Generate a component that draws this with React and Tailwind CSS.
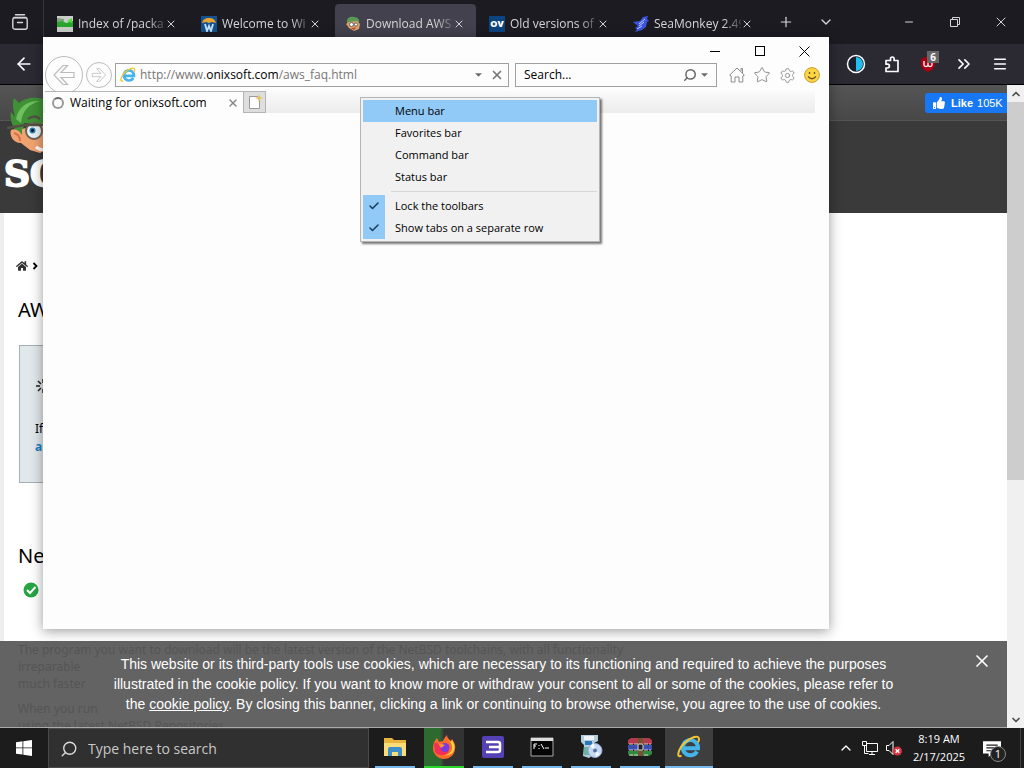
import React from 'react';
import {
  ArrowLeft,
  Check,
  ChevronDown,
  ChevronsRight,
  ChevronUp,
  Menu,
  Minus,
  Plus,
  Search,
  Settings,
  Star,
  X,
} from 'lucide-react';
import { FaHome, FaThumbsUp } from 'react-icons/fa';

const IeLogo = ({ className }) => (
  <svg viewBox="0 0 24 24" className={className} fill="none">
    <path d="M20 16.500a7.600 7.600 0 1 1 1-3.300H7" stroke="#45b4ea" strokeWidth="4" />
    <path d="M4.500 20.500C-1 24 1 14 7.500 8 14 2 22-.5 22 4c0 1.200-.5 2.500-1 3.300" stroke="#f2c531" strokeWidth="2" />
  </svg>
);

const MascotIcon = () => (
  <svg viewBox="0 0 16 16" className="size-4 shrink-0">
    <path d="M2 7C1 2 5 0 9 1c4 0 6 3 5 6l-3-1-7 1z" fill="#5b9a55" />
    <path d="M1 8l3-2 8-1 3 3-1 5-5 2-5-3z" fill="#dfa06c" />
    <circle cx="6.500" cy="8.500" r="2" fill="#fff" stroke="#666" />
    <circle cx="11" cy="8.500" r="1.600" fill="#fff" stroke="#666" />
    <path d="M6 12l5-.5-2 2.500z" fill="#b3433b" />
  </svg>
);

const tabs = [
  {
    title: 'Index of /packa',
    icon: (
      <svg viewBox="0 0 16 16" className="size-4 shrink-0">
        <path d="M0 0h16v16H0z" fill="#c9cfc8" />
        <path d="M0 5l4-1 5 3 7-2v6H0z" fill="#27a52d" />
        <path d="M0 2l7 1v2L0 6z" fill="#7fa37c" />
        <path d="M10 5l5-3v5z" fill="#4edc38" />
      </svg>
    ),
  },
  {
    title: 'Welcome to Wi',
    icon: (
      <svg viewBox="0 0 16 16" className="size-4 shrink-0">
        <path d="M0 0h16v16H0z" fill="#15518f" />
        <path d="M1 7c1-4 4-5 7-5s6 1 7 5l-4-1-3 1-3-1z" fill="#e8a531" />
        <path d="M4 8l2 7 2-5 2 5 2-7" fill="none" stroke="#c8e3f7" strokeWidth="1.800" />
      </svg>
    ),
  },
  { title: 'Download AWS', icon: <MascotIcon />, active: true },
  {
    title: 'Old versions of',
    icon: <span className="flex size-4 shrink-0 items-center justify-center bg-[#0c4480] text-[9px] font-black text-white">OV</span>,
  },
  {
    title: 'SeaMonkey 2.49',
    icon: (
      <svg viewBox="0 0 16 16" className="size-4 shrink-0">
        <path d="M0 6l7-1 3-4 5-1-1 3 2 2-2 1-1 5-4 3-7 2 2-3-2-1 3-2z" fill="#3b55dc" />
        <path d="M6 8l6-5M6 10l5-4M4 13l5-3" stroke="#b9ccff" />
      </svg>
    ),
  },
];

const Tab = ({ title, icon, active }) => (
  <div className={`mt-1 mr-[3px] flex h-10 w-[141px] items-center pl-[10px] ${active ? 'rounded-t bg-[#42414d]' : ''}`}>
    {icon}
    <span className="ml-[5px] w-[87px] whitespace-nowrap text-xs [mask-image:linear-gradient(to_right,black_80%,transparent_105%)]">
      {title}
    </span>
    <button aria-label="Close tab"><X className="size-3" strokeWidth={2} /></button>
  </div>
);

const RestoreIcon = () => (
  <svg viewBox="0 0 12 12" className="size-3" fill="none" stroke="currentColor">
    <path d="M1.500 3.500h7v7h-7zM3.500 3.500v-2h7v7h-2" />
  </svg>
);

const FirefoxChrome = () => (
  <header className="text-[#d5d5d9]">
    <div className="flex h-11 bg-[#1c1b22]">
      <button aria-label="Recent tabs" className="flex w-11 items-center border-r border-[#35343c] pl-3">
        <svg viewBox="0 0 16 16" className="size-4" fill="none" stroke="currentColor" strokeWidth="1.400">
          <path d="M3.500.7h9M2 3.500h12" strokeLinecap="round" />
          <rect x=".8" y="3.700" width="14.400" height="11.500" rx="2" />
          <path d="M5.500 8.500h5" strokeLinecap="round" />
        </svg>
      </button>
      <nav className="ml-[3px] flex">
        {tabs.map((tab) => <Tab key={tab.title} {...tab} />)}
      </nav>
      <button aria-label="New tab" className="w-10 pl-[11px]"><Plus className="size-4" strokeWidth={1.8} /></button>
      <button aria-label="List all tabs" className="w-10 pl-[11px]"><ChevronDown className="size-4" strokeWidth={2} /></button>
      <div className="ml-auto flex">
        <button aria-label="Minimize" className="flex w-[46px] items-center justify-center"><Minus className="size-3" strokeWidth={2} /></button>
        <button aria-label="Restore" className="flex w-[46px] items-center justify-center"><RestoreIcon /></button>
        <button aria-label="Close" className="flex w-[46px] items-center justify-center"><X className="size-4" strokeWidth={1.5} /></button>
      </div>
    </div>
    <div className="flex h-[41px] items-center border-b border-black bg-[#2b2a33] px-[14px] text-[#fbfbfe]">
      <button aria-label="Back"><ArrowLeft className="size-5" strokeWidth={2} /></button>
      <div className="ml-auto flex items-center gap-4">
        <button aria-label="Dark mode">
          <svg viewBox="0 0 20 20" className="size-5">
            <circle cx="10" cy="10" r="8.500" fill="#17202c" stroke="#fff" strokeWidth="1.500" />
            <path d="M10 3a7 7 0 0 1 0 14z" fill="#23bdf0" />
          </svg>
        </button>
        <button aria-label="Extensions">
          <svg viewBox="0 0 20 20" className="size-5" fill="none" stroke="currentColor" strokeWidth="1.700">
            <path d="M4 6.500h4.500V4.800a1.800 1.800 0 0 1 3.600 0v1.700H16v11H4V14h1.500a1.900 1.900 0 0 0 0-3.800H4z" strokeLinejoin="round" />
          </svg>
        </button>
        <button aria-label="uBlock" className="relative">
          <svg viewBox="0 0 20 20" className="size-5">
            <path d="M10 2l7 3v6c0 3-3 5-7 7-4-2-7-4-7-7V5z" fill="#a80010" />
            <path d="M6 7v4q0 1.500 2 1.500t2-1.500V7M10 11q0 1.500 2 1.500t2-1.500V9" fill="none" stroke="#fff" strokeWidth="1.300" />
          </svg>
          <span className="absolute -top-[3px] -right-[1px] w-3 bg-[#666] text-center text-[10px] leading-3 font-bold">6</span>
        </button>
        <button aria-label="More tools"><ChevronsRight className="size-5" strokeWidth={2} /></button>
        <button aria-label="Menu" className="px-[2px]"><Menu className="size-4" strokeWidth={2.2} /></button>
      </div>
    </div>
  </header>
);

const Mascot = () => (
  <svg viewBox="0 0 60 58" className="h-[58px] w-[60px]">
    <path d="M22 40c-8-6-13-16-11-25l4 5C13 12 12 6 14 1l5 5C27-1 46-2 56 10v20L24 26z" fill="#3f9136" />
    <path d="M16 22C18 10 28 3 40 4 29 7 22 14 21 26z" fill="#6fbf5e" />
    <path d="M22 32l22-6 12 8-2 14-14 8-10-3-9-7C13 46 9 38 11 33c4-2 8 0 11 5z" fill="#f0a370" />
    <path d="M14 36c4 1 6 4 6 8" fill="none" stroke="#d9704c" strokeWidth="2" />
    <circle cx="34" cy="34" r="8" fill="#e9f3f5" stroke="#6d6354" strokeWidth="2" />
    <circle cx="32.500" cy="33.500" r="3" fill="#277fae" />
    <circle cx="32.500" cy="33.500" r="1.400" fill="#112" />
    <path d="M7 31l18-3h20M28 22q7-5 12 0" stroke="#555044" strokeWidth="2.500" fill="none" />
    <path d="M36 50q5 4 10 2" stroke="#fff" strokeWidth="3" fill="none" />
  </svg>
);

const SitePage = () => (
  <main className="relative min-h-0 flex-1 overflow-hidden bg-white">
    <div className="flex h-[35px] justify-end bg-linear-to-b from-[#555] to-[#484848] pt-2">
      <a href="#like" className="flex h-5 w-[82px] items-center gap-[6px] rounded-l-[3px] bg-[#1877f2] pl-2 font-['Liberation_Sans'] text-[11px] text-white">
        <FaThumbsUp className="size-3" />
        <span className="flex gap-1"><b>Like</b><span>105K</span></span>
      </a>
    </div>
    <div className="h-[93px] border-t border-[#555] bg-[#3a3a3a]">
      <div className="-mt-6 flex h-[117px] w-[60px] flex-col overflow-hidden">
        <Mascot />
        <span className="pl-1 font-['DejaVu_Serif'] text-4xl leading-9 font-bold text-white [-webkit-text-stroke:2px_white]">SO</span>
      </div>
    </div>
    <div className="h-full border-l-4 border-[#eee] pl-[14px] font-['Noto_Sans'] text-black">
      <div className="-ml-[2px] flex items-center gap-1 pt-[47px] text-xs leading-3">
        <a href="#home" aria-label="Home"><FaHome className="size-3 text-[#333]" /></a>
        <svg viewBox="0 0 6 8" className="h-2 w-[6px]" fill="none" stroke="black" strokeWidth="1.800"><path d="M1.500 1l3 3-3 3" /></svg>
      </div>
      <h1 className="pt-6 text-xl leading-7">AWS</h1>
      <div className="mt-[21px] ml-[1px] h-[138px] w-[560px] border border-[#a6b0b4] bg-[#e1e8eb] pt-8 pl-[15px] text-xs">
        <svg viewBox="0 0 16 16" className="size-4" stroke="#222" strokeWidth="1.500">
          <path d="M8 1v4M3 3l3 3M1 8h4M3 13l3-3M8 11v4" />
        </svg>
        <p className="mt-[26px] leading-[18px]">If</p>
        <a href="#alt" className="block leading-[18px] font-bold text-[#1c7fc0]">a</a>
      </div>
      <h2 className="pt-[59px] text-xl leading-7">Next</h2>
      <svg viewBox="0 0 16 16" className="mt-3 ml-[5px] size-4">
        <circle cx="8" cy="8" r="7.500" fill="#27a544" />
        <path d="M4 8l3 3 5.500-6" fill="none" stroke="#fff" strokeWidth="2" />
      </svg>
    </div>
    <aside className="absolute inset-x-0 bottom-0 h-[87px] overflow-hidden border-b border-[#aaa] bg-[#636363] font-['Liberation_Sans'] text-sm text-white">
      {/* article text showing faintly through the banner */}
      <div aria-hidden="true" className="absolute top-0 left-[18px] font-['Noto_Sans'] text-xs leading-[17px] whitespace-nowrap text-[#555]">
        <p>The program you want to download will be the latest version of the NetBSD toolchains, with all functionality</p>
        <p>irreparable</p>
        <p>much faster</p>
        <p className="mt-2">When you run</p>
        <p>using the latest NetBSD Repositories</p>
      </div>
      <p className="relative pt-[13px] text-center leading-5">
        This website or its third-party tools use cookies, which are necessary to its functioning and required to achieve the purposes
        <br />
        illustrated in the cookie policy. If you want to know more or withdraw your consent to all or some of the cookies, please refer to
        <br />
        the <a href="#policy" className="underline">cookie policy</a>. By closing this banner, clicking a link or continuing to browse otherwise, you agree to the use of cookies.
      </p>
      <button aria-label="Close banner" className="absolute top-[10px] right-[15px]"><X className="size-5" strokeWidth={2} /></button>
    </aside>
  </main>
);

const Scrollbar = () => (
  <div className="flex w-[17px] flex-col bg-[#f0f0f0] text-[#505050]">
    <button aria-label="Scroll up" className="flex h-[17px] items-center justify-center"><ChevronUp className="size-3" strokeWidth={3.5} /></button>
    <div className="h-[378px] bg-[#cdcdcd]" />
    <button aria-label="Scroll down" className="mt-auto flex h-[17px] items-center justify-center"><ChevronDown className="size-3" strokeWidth={3.5} /></button>
  </div>
);

const CaretDown = () => (
  <svg viewBox="0 0 8 4" className="h-1 w-[7px] shrink-0"><path d="M0 0h8L4 4z" fill="#6d6d6d" /></svg>
);

const HollowArrow = ({ className }) => (
  <svg viewBox="0 0 24 24" className={className} fill="none" stroke="#bcbcbc" strokeWidth="1.200">
    <path d="M11 2.500h4.500L9 9.500h13v5H9l6.500 7H11L2 12z" />
  </svg>
);

const ToolbarMenu = () => (
  <div role="menu" className="absolute top-[60px] left-[317px] w-[240px] border border-[#b5b5b5] bg-[#f1f1f1] p-[2px] text-[11px] text-black shadow-[2px_2px_2px_#0008]">
    {['Menu bar', 'Favorites bar', 'Command bar', 'Status bar'].map((name) => (
      <button key={name} role="menuitem" className={`block h-[22px] w-full pl-8 text-left ${name === 'Menu bar' ? 'bg-[#91c9f7]' : ''}`}>
        {name}
      </button>
    ))}
    <hr className="my-[3px] ml-7 border-[#d7d7d7]" />
    {['Lock the toolbars', 'Show tabs on a separate row'].map((name) => (
      <button key={name} role="menuitemcheckbox" aria-checked="true" className="flex h-[22px] w-full items-center text-left">
        <span className="flex h-full w-[22px] items-center justify-center bg-[#91c9f7] text-[#143c5c]">
          <Check className="size-3" strokeWidth={3} />
        </span>
        <span className="pl-[10px]">{name}</span>
      </button>
    ))}
  </div>
);

const IeWindow = () => (
  <section className="absolute top-[37px] left-[43px] h-[592px] w-[786px] bg-[#fdfdfd] text-xs text-black shadow-[0_2px_12px_#0006]">
    <div className="flex h-[26px] justify-end pt-[2px] pr-[2px]">
      <button aria-label="Minimize" className="flex w-[45px] items-center justify-center">
        <svg viewBox="0 0 10 10" className="size-[10px]"><path d="M0 5h10v1H0z" /></svg>
      </button>
      <button aria-label="Maximize" className="flex w-[45px] items-center justify-center">
        <span className="size-[10px] border border-black" />
      </button>
      <button aria-label="Close" className="flex w-[45px] items-center justify-center">
        <svg viewBox="0 0 11 11" className="size-[11px]" stroke="black"><path d="M.5.5l10 10M10.500.5l-10 10" /></svg>
      </button>
    </div>
    <div className="flex h-6 items-center pr-[9px] pl-[2px]">
      <button aria-label="Back" className="flex size-[38px] shrink-0 items-center justify-center rounded-full border border-[#bcbcbc]">
        <HollowArrow className="size-6" />
      </button>
      <button aria-label="Forward" className="ml-[3px] flex size-[26px] shrink-0 items-center justify-center rounded-full border border-[#bcbcbc]">
        <HollowArrow className="size-4 rotate-180" />
      </button>
      <div className="ml-[3px] flex h-6 flex-1 items-center border border-[#a0a0a0] px-1">
        <IeLogo className="size-4" />
        <div className="flex-1 pl-1 text-[#777]">
          http://www.<span className="text-black">onixsoft.com</span>/aws_faq.html
        </div>
        <button aria-label="Show history"><CaretDown /></button>
        <button aria-label="Stop" className="ml-2"><X className="size-[14px] text-[#777]" strokeWidth={3} /></button>
      </div>
      <div className="ml-[6px] flex h-6 w-[202px] items-center border border-[#a0a0a0] px-2">
        <input aria-label="Search" defaultValue="Search..." className="min-w-0 flex-1 outline-none" />
        <Search className="size-[14px] -scale-x-100 text-[#666]" strokeWidth={2.5} />
        <button aria-label="Search options" className="ml-1"><CaretDown /></button>
      </div>
      <div className="ml-3 flex items-center gap-2 text-[#8c8c8c]">
        <button aria-label="Home">
          <svg viewBox="0 0 16 16" className="size-4" fill="none" stroke="currentColor">
            <path d="M.7 8L8 1l7.300 7-1.500 1V15H10v-5H6v5H2.200V9zM12 4V1.500h1.500V6" />
          </svg>
        </button>
        <button aria-label="Favorites"><Star className="size-[18px]" strokeWidth={1.3} /></button>
        <button aria-label="Tools"><Settings className="size-[17px]" strokeWidth={1.3} /></button>
        <button aria-label="Feedback">
          <svg viewBox="0 0 16 16" className="size-4">
            <circle cx="8" cy="8" r="7.400" fill="#fbd644" stroke="#c99a2a" />
            <path d="M5.500 5v2M10.500 5v2M4 9.500q4 4.500 8 0" fill="none" stroke="#70531c" strokeWidth="1.300" />
          </svg>
        </button>
      </div>
    </div>
    <div className="relative mt-1 mr-[14px] flex h-[22px] bg-linear-to-b from-[#fafafa] to-[#ececec]">
      <div className="ml-[2px] flex w-[198px] items-center border-t border-[#b5b5b5] bg-[#fdfdfd] pl-[7px]">
        <span className="size-3 rounded-full border-2 border-[#9a9a9a] border-t-[#666]" />
        <span className="pl-[6px]">Waiting for onixsoft.com</span>
        <button aria-label="Close tab" className="mr-1 ml-auto"><X className="size-3 text-[#888]" strokeWidth={3} /></button>
      </div>
      <button aria-label="New tab" className="flex w-[23px] items-center justify-center border border-[#b5b5b5] bg-[#dedede]">
        <svg viewBox="0 0 16 16" className="size-4">
          <path d="M2.500 2.500h8l2 3v9h-10z" fill="#fff" stroke="#999" />
          <path d="M12 0l1 3 3 1-3 1-1 3-1-3-3-1 3-1z" fill="#e6c067" />
        </svg>
      </button>
    </div>
    <ToolbarMenu />
  </section>
);

const apps = [
  {
    name: 'File Explorer',
    icon: (
      <svg viewBox="0 0 24 24" className="size-6">
        <path d="M1 3h8l2 2h12v16H1z" fill="#e8b43a" />
        <path d="M1 8h22v13H1z" fill="#fbdc78" />
        <path d="M5 21v-7q0-2 2-2h10q2 0 2 2v7h-4v-4H9v4z" fill="#3c8fc9" />
      </svg>
    ),
  },
  {
    name: 'Firefox',
    icon: (
      <svg viewBox="0 0 24 24" className="size-6">
        <path d="M1 13C1 8 3 5 5 3l2 4 4-1c1-3 3-5 4-6 0 3 2 4 4 6l1-2c2 3 4 6 3 10a11 10.500 0 0 1-22-1z" fill="#ff6b2b" />
        <path d="M14 1c1 4 5 5 6 10 1 6-4 9-8 9 8 2 12-5 10-11l-2-4-1 2c-2-2-4-3-5-6z" fill="#ffd53c" />
        <path d="M2 9c2-2 5-1 7 0l4 1-4 3c1 3 5 4 8 2-1 6-10 7-14 2z" fill="#f32f55" />
        <circle cx="13" cy="12.500" r="4.500" fill="#7a3be0" />
        <path d="M6 8l7 2-4 3z" fill="#ff9a30" />
      </svg>
    ),
  },
  {
    name: 'Editor',
    icon: (
      <svg viewBox="0 0 24 24" className="size-6">
        <rect x="1" y="1" width="22" height="22" rx="2" fill="#5540b4" />
        <path d="M5 7h12q2 0 2 2v6q0 2-2 2H5M8 12h11" fill="none" stroke="#fff" strokeWidth="2.500" />
      </svg>
    ),
  },
  {
    name: 'Command Prompt',
    icon: (
      <svg viewBox="0 0 24 24" className="size-6">
        <path d="M1 3h22v18H1z" fill="#050505" stroke="#aaa" />
        <path d="M1 3h22v3H1z" fill="#ddd" />
        <path d="M4 9v5M4 9h3M4 11h2M9 10v1M9 13v1M11 9l3 5M15 13h4" stroke="#fff" fill="none" />
      </svg>
    ),
  },
  {
    name: 'Installer',
    icon: (
      <svg viewBox="0 0 24 24" className="size-6">
        <path d="M2 0h17v6l-4 2 3 9-8 6-6-2 1-11-3-3z" fill="#b4cddd" />
        <path d="M5 1h10v4H5z" fill="#eef5f8" />
        <path d="M6 6h7v4H6z" fill="#2c77b8" />
        <path d="M5 12h5v8H5z" fill="#69b3a5" />
        <circle cx="16" cy="15.500" r="7" fill="#c6d9f2" stroke="#8da5cc" />
        <path d="M16 15l-5-4 4-3zM16 15l5 4-4 3z" fill="#f2f9ff" />
        <circle cx="16" cy="15.500" r="2" fill="#5672a6" />
      </svg>
    ),
  },
  {
    name: 'WinRAR',
    icon: (
      <svg viewBox="0 0 24 24" className="size-6">
        <path d="M0 5l3-2h18l3 2v4H0z" fill="#b33b4e" />
        <path d="M0 10h24v5H0z" fill="#3d4fb1" />
        <path d="M0 16h24v3l-3 2H3l-3-2z" fill="#2f8a40" />
        <path d="M1 9h22M1 15h22M1 20h20" stroke="#d9d3c5" strokeDasharray="4 1" />
        <path d="M10 3h5v18h-5z" fill="#765230" />
        <rect x="10" y="9" width="5" height="6" rx="1" fill="#222" stroke="#ddd" />
      </svg>
    ),
  },
  { name: 'Internet Explorer', icon: <IeLogo className="size-6" />, active: true },
];

const taskStyle = (app) => {
  if (app.name === 'Firefox') return 'bg-linear-to-r from-[#2d6a30] from-40% to-[#333] to-50%';
  return app.active ? 'bg-[#3e3e3e]' : '';
};

const Taskbar = () => (
  <footer className="flex h-10 shrink-0 bg-[#1c1c1c] text-white">
    <button aria-label="Start" className="flex w-12 items-center justify-center">
      <svg viewBox="0 0 16 16" className="size-4" fill="white"><path d="M0 2.200l6.500-.9v6.200H0zM7.300 1.200L16 0v7.500H7.300zM0 8.300h6.500v6.200L0 13.700zM7.300 8.300H16V16l-8.700-1.200z" /></svg>
    </button>
    <label className="flex w-[321px] items-center border border-[#4a4a4a] bg-[#303030] pt-[2px] pl-[11px]">
      <Search className="size-[18px] -scale-x-100 text-[#ddd]" strokeWidth={1.8} />
      <input aria-label="Type here to search" placeholder="Type here to search" className="ml-[10px] w-60 text-sm outline-none placeholder:text-[#c8c8c8]" />
    </label>
    <div className="ml-[2px] flex gap-[1px]">
      {apps.map((app) => (
        <button key={app.name} aria-label={app.name} className={`flex w-12 flex-col items-center ${app.name === 'Firefox' ? 'px-1' : ''}`}>
          <span className={`flex h-[38px] w-full items-center justify-center ${taskStyle(app)}`}>{app.icon}</span>
          <span className={`h-[2px] ${app.active ? 'w-12' : 'w-10'} ${app.name === 'Firefox' ? 'bg-[#2cd52c]' : 'bg-[#76b9ed]'}`} />
        </button>
      ))}
    </div>
    <div className="ml-auto flex items-center">
      <button aria-label="Show hidden icons"><ChevronUp className="size-4" strokeWidth={2} /></button>
      <button aria-label="Network" className="ml-2">
        <svg viewBox="0 0 16 16" className="size-4" fill="none" stroke="currentColor">
          <path d="M4.500 3.500h11v8h-11zM7 14.500h6M10 11.500v3M.5 1.500h4v4h-4zM2.500 5.500v8h4" />
        </svg>
      </button>
      <button aria-label="Volume" className="ml-2">
        <svg viewBox="0 0 16 16" className="size-4" fill="none" stroke="currentColor">
          <path d="M.5 5.500H3l4-4v13l-4-4H.5z" />
          <circle cx="11.500" cy="11" r="4.500" fill="#d9303f" stroke="none" />
          <path d="M9.700 9.200l3.600 3.600M13.300 9.200l-3.600 3.600" strokeWidth="1.400" />
        </svg>
      </button>
      <div className="ml-[6px] w-[62px] text-center text-[11px] leading-[18px]">
        <div>8:19 AM</div>
        <div>2/17/2025</div>
      </div>
      <button aria-label="Notifications" className="relative ml-3 h-full w-[38px]">
        <svg viewBox="0 0 16 16" className="mt-[2px] ml-[1px] size-[18px]">
          <path d="M0 1h16v11H8l-3 3v-3H0z" fill="#fff" />
          <path d="M3 4.500h10M3 7h10M3 9.500h6" stroke="#1c1c1c" />
        </svg>
        <span className="absolute top-[18px] left-2 flex size-4 items-center justify-center rounded-full border border-[#888] bg-[#222] text-[11px]">1</span>
      </button>
      <div className="mr-[3px] h-full w-[1px] bg-[#444]" />
    </div>
  </footer>
);

const App = () => (
  <div className="relative flex h-screen flex-col overflow-hidden bg-[#1c1b22] font-['Open_Sans','Noto_Sans',sans-serif]">
    <FirefoxChrome />
    <div className="flex min-h-0 flex-1">
      <SitePage />
      <Scrollbar />
    </div>
    <Taskbar />
    <IeWindow />
  </div>
);

export default App;
